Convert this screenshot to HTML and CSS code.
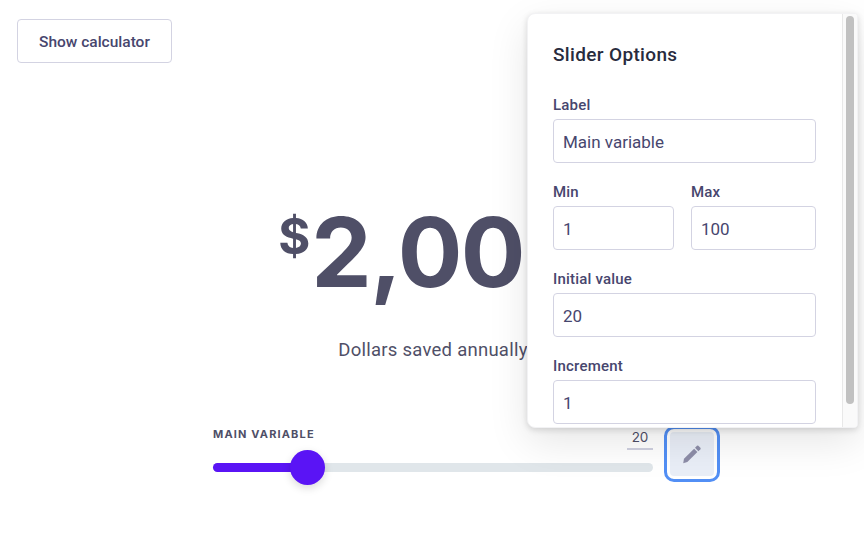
FILE: index.html
```
<!DOCTYPE html>
<html lang="en">
<head>
  <meta charset="UTF-8">
  <meta name="viewport" content="width=device-width, initial-scale=1.0">
  <title>Savings Calculator</title>
  <link rel="stylesheet" href="styles.css">
</head>
<body>
  <header>
    <button class="show-button">Show calculator</button>
  </header>

  <main class="calculator">
    <div class="total"><span class="currency">$</span>2,000</div>
    <p class="caption">Dollars saved annually</p>

    <div class="slider-row">
      <div class="slider">
        <div class="slider-top">
          <span class="slider-label">Main variable</span>
          <span class="slider-value">20</span>
        </div>
        <div class="track">
          <div class="fill" style="width: 94px;"></div>
          <div class="thumb"></div>
        </div>
      </div>
      <button class="edit-button" aria-label="Edit slider">
        <svg width="20" height="20" viewBox="0 0 20 20">
          <path d="M1.2 19.2l.8-4.4L12.1 4.7l3.3 3.3L5.3 18z"/>
          <path d="M13 3.8l2-2q.7-.6 1.4 0l2 2q.6.7 0 1.4l-2 2z"/>
        </svg>
      </button>
    </div>
  </main>

  <div class="options">
    <form class="options-body">
      <h2>Slider Options</h2>
      <label class="field">Label
        <input type="text" value="Main variable">
      </label>
      <div class="field-row">
        <label class="field field-min">Min
          <input type="text" value="1">
        </label>
        <label class="field field-max">Max
          <input type="text" value="100">
        </label>
      </div>
      <label class="field">Initial value
        <input type="text" value="20">
      </label>
      <label class="field">Increment
        <input type="text" value="1">
      </label>
    </form>
    <div class="scrollbar">
      <div class="scroll-thumb"></div>
    </div>
  </div>
</body>
</html>
```
FILE: styles.css
```
* {
  box-sizing: border-box;
}

body {
  margin: 0;
  height: 559px;
  overflow: hidden;
  background: white;
  color: #4f4f67;
  font-family: Roboto, sans-serif;
}

header {
  padding: 19px 17px 0;
}

.show-button {
  display: block;
  width: 155px;
  height: 44px;
  padding: 2px 0 0;
  background: white;
  border: 1px solid #d3d3e2;
  border-radius: 4px;
  color: #47466e;
  font: 500 15.5px Roboto, sans-serif;
}

.calculator {
  width: 507px;
  margin: 129px 0 0 213px;
}

.total {
  display: flex;
  justify-content: center;
  width: 440px;
  height: 120px;
  padding-right: 1px;
  font: bold 96px/121px Inter, sans-serif;
  letter-spacing: -1.7px;
}

.currency {
  margin-right: 1px;
  font-size: 49px;
  line-height: 90px;
  letter-spacing: 0;
}

.caption {
  width: 440px;
  height: 24px;
  margin: 26px 0 0;
  font-size: 18.5px;
  line-height: 24px;
  letter-spacing: 0.25px;
  text-align: center;
}

.slider-row {
  display: flex;
  gap: 11px;
  margin-top: 64px;
}

.slider {
  width: 440px;
}

.slider-top {
  display: flex;
  justify-content: space-between;
  height: 37px;
}

.slider-label {
  font: bold 11px/16px Inter, sans-serif;
  letter-spacing: 1.15px;
  text-transform: uppercase;
}

.slider-value {
  width: 26px;
  height: 24px;
  border-bottom: 2px solid #cfd0df;
  font: 13.5px/22px Inter, sans-serif;
  text-align: center;
}

.track {
  display: flex;
  align-items: center;
  height: 9px;
  background: #e0e6ea;
  border-radius: 5px;
}

.fill {
  height: 9px;
  background: #5a14f5;
  border-radius: 5px;
}

.thumb {
  width: 35px;
  height: 35px;
  margin-left: -17px;
  background: #5a14f5;
  border-radius: 50%;
  box-shadow: 0 3px 8px rgba(0, 0, 0, 0.15);
}

.edit-button {
  display: flex;
  align-items: center;
  justify-content: center;
  width: 56px;
  height: 56px;
  padding: 0;
  background: #e9eef7;
  border: 3px solid #528ff5;
  border-radius: 10px;
  box-shadow: inset 0 0 0 3px white;
}

.edit-button svg {
  fill: #8d8da8;
}

/* popover over the calculator */
.options {
  position: absolute;
  top: 13px;
  left: 527px;
  display: flex;
  width: 331px;
  height: 415px;
  overflow: hidden;
  background: white;
  border: 1px solid #f2f2f4;
  border-radius: 8px 4px 4px 8px;
  box-shadow: 0 2px 6px rgba(0, 0, 0, 0.14), 0 14px 40px rgba(0, 0, 0, 0.1);
}

.options-body {
  flex: 1;
  padding: 27px 26px 0 25px;
}

.options h2 {
  margin: 0 0 24px;
  color: #282b3d;
  font-size: 19px;
  font-weight: 500;
  line-height: 28px;
  letter-spacing: 0.35px;
}

.field {
  display: block;
  height: 87px;
  color: #47466e;
  font-size: 15px;
  font-weight: 500;
  line-height: 24px;
  letter-spacing: 0.2px;
}

.field-row {
  display: flex;
  gap: 17px;
}

.field-min {
  width: 121px;
}

.field-max {
  width: 125px;
}

.field input {
  display: block;
  width: 100%;
  height: 44px;
  margin-top: 2px;
  padding: 2px 9px 0;
  background: white;
  border: 1px solid #d3d3e2;
  border-radius: 4px;
  color: #47466e;
  font: 17px Roboto, sans-serif;
}

.scrollbar {
  width: 15px;
  padding: 2px 3px;
  background: #fafafa;
  border-left: 1px solid #e8e8e8;
}

.scroll-thumb {
  width: 8px;
  height: 388px;
  background: #c1c1c1;
  border-radius: 4px;
}
```
